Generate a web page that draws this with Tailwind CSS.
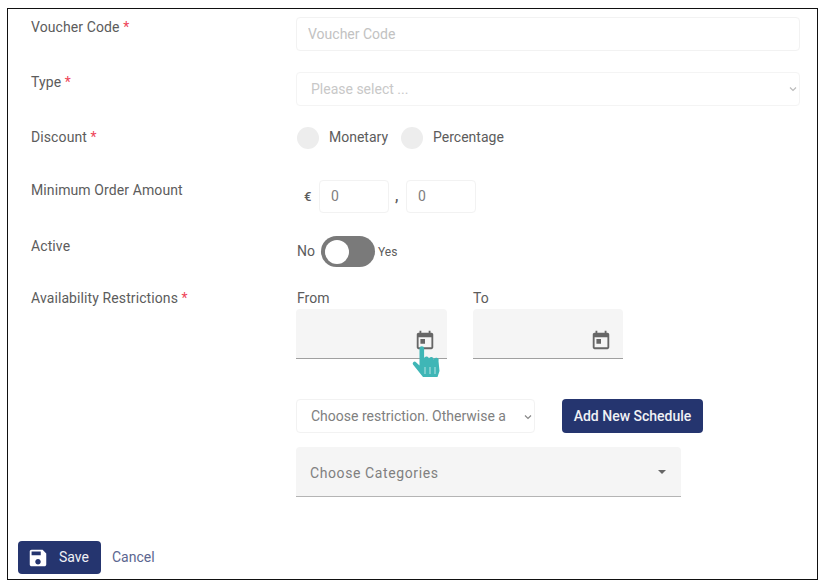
<!DOCTYPE html>
<html lang="en">
<head>
  <meta charset="UTF-8">
  <title>Voucher</title>
  <script src="https://cdn.jsdelivr.net/npm/@tailwindcss/browser@4"></script>
</head>
<body class="bg-white font-['Roboto',sans-serif] text-[14px] text-[#5c5c5c]">
  <div class="relative ml-[7px] mt-[8px] h-[572px] w-[811px] border border-[#111] pl-[10px] pt-[8px]">

    <div class="flex mb-[21px]">
      <label class="w-[278px] pl-[13px] leading-[20px] tracking-[0.1px]">Voucher Code <span class="text-[#ee4458]">*</span></label>
      <input type="text" placeholder="Voucher Code" class="h-[34px] w-[504px] rounded border border-[#f2f2f2] px-[11px] text-[14px] placeholder:text-[#c2c2c2]">
    </div>

    <div class="flex mb-[21px]">
      <label class="w-[278px] pl-[13px] leading-[20px] tracking-[0.1px]">Type <span class="text-[#ee4458]">*</span></label>
      <div class="relative h-[34px] w-[504px] rounded border border-[#f4f4f4] pl-[14px] leading-[32px] text-[#c8c8c8]">
        Please select ...
        <svg class="absolute right-[2px] top-[13px] h-[6px] w-[8px]" viewBox="0 0 8 6" fill="none" stroke="#bbb" stroke-width="1.2"><path d="M1 1.5l3 3 3-3"/></svg>
      </div>
    </div>

    <div class="flex mb-[31px]">
      <label class="w-[278px] pl-[13px] leading-[20px] tracking-[0.1px]">Discount <span class="text-[#ee4458]">*</span></label>
      <div class="flex h-[22px] items-center pl-[1px]">
        <span class="h-[22px] w-[22px] rounded-full bg-[#ededed]"></span>
        <span class="ml-[10px] mt-[-1px]">Monetary</span>
        <span class="ml-[13px] h-[22px] w-[22px] rounded-full bg-[#ededed]"></span>
        <span class="ml-[10px] mt-[-1px]">Percentage</span>
      </div>
    </div>

    <div class="flex mb-[23px]">
      <label class="w-[278px] pl-[13px] leading-[20px] tracking-[0.1px]">Minimum Order Amount</label>
      <div class="flex items-center">
        <span class="ml-[8px] w-[15px] text-[13px] font-medium">€</span>
        <div class="h-[33px] w-[70px] rounded border border-[#f2f2f2] pl-[11px] leading-[31px] text-[#808080]">0</div>
        <span class="w-[17px] pl-[6px] font-bold">,</span>
        <div class="h-[33px] w-[70px] rounded border border-[#f2f2f2] pl-[11px] leading-[31px] text-[#808080]">0</div>
      </div>
    </div>

    <div class="flex mb-[23px]">
      <label class="w-[278px] pl-[13px] leading-[20px] tracking-[0.1px]">Active</label>
      <div class="flex h-[31px] items-center">
        <span class="ml-[1px]">No</span>
        <div class="ml-[6px] flex h-[31px] w-[54px] items-center rounded-full bg-[#7a7a7a] pl-[4px]">
          <span class="h-[24px] w-[24px] rounded-full bg-white"></span>
        </div>
        <span class="ml-[3px] text-[12px]">Yes</span>
      </div>
    </div>

    <div class="flex">
      <label class="w-[278px] pl-[13px] leading-[16px] tracking-[0.1px]">Availability Restrictions <span class="text-[#ee4458]">*</span></label>
      <div>
        <div class="flex gap-[26px]">
          <div class="w-[151px]">
            <div class="mb-[3px] pl-[1px] leading-[16px]">From</div>
            <div class="flex h-[50px] items-end justify-end rounded-t border-b border-[#a0a0a0] bg-[#f5f5f5] pb-[7px] pr-[11px]">
              <svg class="h-[22px] w-[22px]" viewBox="0 0 24 24" fill="#666"><path d="M19 4h-1V2h-2v2H8V2H6v2H5c-1.11 0-1.99.9-1.99 2L3 20c0 1.1.89 2 2 2h14c1.1 0 2-.9 2-2V6c0-1.1-.9-2-2-2zm0 16H5V9h14v11zM7 11h5v5H7z"/></svg>
            </div>
          </div>
          <div class="w-[150px]">
            <div class="mb-[3px] leading-[16px]">To</div>
            <div class="flex h-[50px] items-end justify-end rounded-t border-b border-[#a0a0a0] bg-[#f5f5f5] pb-[7px] pr-[11px]">
              <svg class="h-[22px] w-[22px]" viewBox="0 0 24 24" fill="#666"><path d="M19 4h-1V2h-2v2H8V2H6v2H5c-1.11 0-1.99.9-1.99 2L3 20c0 1.1.89 2 2 2h14c1.1 0 2-.9 2-2V6c0-1.1-.9-2-2-2zm0 16H5V9h14v11zM7 11h5v5H7z"/></svg>
            </div>
          </div>
        </div>

        <div class="mt-[40px] flex items-center">
          <div class="relative h-[34px] w-[239px] rounded border border-[#f2f2f2] pl-[14px] leading-[32px] text-[#808080]">
            Choose restriction. Otherwise a
            <svg class="absolute right-[2px] top-[14px] h-[6px] w-[8px]" viewBox="0 0 8 6" fill="none" stroke="#888" stroke-width="1.2"><path d="M1 1.5l3 3 3-3"/></svg>
          </div>
          <button class="ml-[27px] h-[34px] w-[141px] rounded bg-[#25356f] text-center font-medium text-[#f0f1f5]">Add New Schedule</button>
        </div>

        <div class="mt-[14px] flex h-[50px] w-[385px] items-center justify-between rounded-t border-b border-[#b4b4b4] bg-[#f5f5f5] pl-[14px] pr-[15px] tracking-[0.6px] text-[#808080]">
          <span class="mt-[3px]">Choose Categories</span>
          <span class="h-0 w-0 border-x-[4px] border-t-[4px] border-x-transparent border-t-[#666]"></span>
        </div>
      </div>
    </div>

    <div class="mt-[44px] flex items-center">
      <button class="flex h-[33px] w-[83px] items-center rounded bg-[#25356f] pl-[9px] text-[#f0f1f5]">
        <svg class="h-[22px] w-[22px]" viewBox="0 0 24 24" fill="#fff"><path d="M17 3H5c-1.11 0-2 .9-2 2v14c0 1.1.89 2 2 2h14c1.1 0 2-.9 2-2V7l-4-4zm-5 16c-1.66 0-3-1.34-3-3s1.34-3 3-3 3 1.34 3 3-1.34 3-3 3zm3-10H5V5h10v4z"/></svg>
        <span class="ml-[10px]">Save</span>
      </button>
      <a class="ml-[11px] text-[#5b668f]">Cancel</a>
    </div>

    <!-- cursor over the date picker -->
    <svg class="absolute left-[403px] top-[336px] h-[34px] w-[32px]" viewBox="0 0 32 34" fill="#3fb6b6">
      <path d="M8.5 3.5a2.3 2.3 0 0 1 4.6 0V13a2.5 2.5 0 0 1 4.8 .5a2.5 2.5 0 0 1 4.8 1a2.5 2.5 0 0 1 4.8 1.5L28.5 26l-2 6H12L2 19.5a1.9 1.9 0 0 1 3-2.3L8.5 20.5z"/>
      <path d="M14 22v7M19 22v7M24 22v7" stroke="#d5f0f0" stroke-width=".8" fill="none"/>
    </svg>
  </div>
</body>
</html>
